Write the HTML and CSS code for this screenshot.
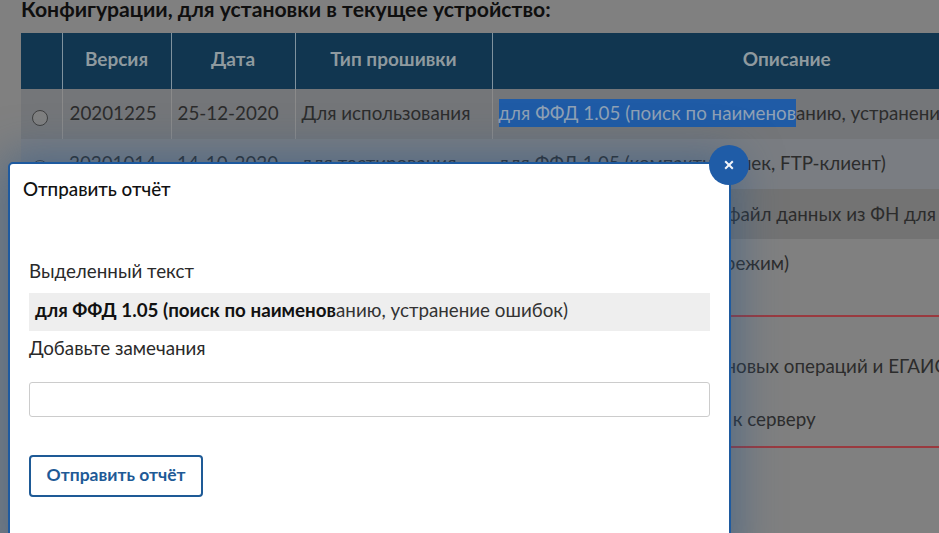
FILE: index.html
```html
<!DOCTYPE html>
<html lang="ru">
<head>
<meta charset="utf-8">
<title>Отправить отчёт</title>
<link rel="stylesheet" href="styles.css">
</head>
<body>
<main class="page">
  <h2 class="page-title">Конфигурации, для установки в текущее устройство:</h2>
  <table class="fw-table">
    <colgroup>
      <col class="c-radio"><col class="c-ver"><col class="c-date"><col class="c-type"><col class="c-desc">
    </colgroup>
    <thead>
      <tr><th></th><th>Версия</th><th>Дата</th><th>Тип прошивки</th><th>Описание</th></tr>
    </thead>
    <tbody>
      <tr class="r1 alt">
        <td class="radio-cell"><span class="radio"></span></td><td>20201225</td><td>25-12-2020</td><td>Для использования</td>
        <td><span class="sel">для ФФД 1.05 (поиск по наименов</span>анию, устранение ошибок)</td>
      </tr>
      <tr class="r2">
        <td class="radio-cell"><span class="radio"></span></td><td>20201014</td><td>14-10-2020</td><td>для тестирования</td>
        <td>для ФФД 1.05 (компактный чек, FTP-клиент)</td>
      </tr>
      <tr class="r3 alt">
        <td></td><td></td><td></td><td></td>
        <td>для ФФД 1.05 (сохранит в файл данных из ФН для проверки)</td>
      </tr>
      <tr class="r4">
        <td></td><td></td><td></td><td></td>
        <td>для ФФД 1.05 (текстовый режим)</td>
      </tr>
      <tr class="r5 red">
        <td colspan="5"></td>
      </tr>
      <tr class="r6">
        <td></td><td></td><td></td><td></td>
        <td>для ФФД 1.05 (поверка ценовых операций и ЕГАИС)</td>
      </tr>
      <tr class="r7 red">
        <td></td><td></td><td></td><td></td>
        <td>для ФФД 1.05 (обращение к серверу</td>
      </tr>
    </tbody>
  </table>
</main>

<section class="modal">
  <button class="close" type="button" aria-label="Закрыть">
    <svg width="10" height="10" viewBox="0 0 10 10"><path d="M1.2 1.2L8.8 8.8M8.8 1.2L1.2 8.8" stroke="#f2f5fa" stroke-width="2" fill="none"/></svg>
  </button>
  <h3 class="modal-title">Отправить отчёт</h3>
  <div class="modal-body">
    <label class="label">Выделенный текст</label>
    <div class="quote"><b>для ФФД 1.05 (поиск по наименов</b>анию, устранение ошибок)</div>
    <label class="label label-2">Добавьте замечания</label>
    <input class="field" type="text">
    <button class="submit" type="button">Отправить отчёт</button>
  </div>
</section>
</body>
</html>
```
FILE: styles.css
```css
html, body {
  margin: 0;
  height: 100%;
  overflow: hidden;
  background: #808080;
  font-family: Lato, "Noto Sans", sans-serif;
}
.page {
  padding: 0 0 0 21px;
  width: 1200px;
}
.page-title {
  margin: 0;
  height: 33px;
  font-size: 21.2px;
  line-height: 18px;
  font-weight: 700;
  color: #0f0f0f;
}
.fw-table {
  border-collapse: collapse;
  table-layout: fixed;
  width: 1060px;
  font-size: 18.8px;
  color: #2c2c2c;
}
.c-radio { width: 41px; }
.c-ver { width: 109px; }
.c-date { width: 124px; }
.c-type { width: 197px; }
.c-desc { width: 589px; }
.fw-table th {
  height: 56px;
  padding: 0 0 6px;
  box-sizing: border-box;
  background: #113650;
  color: #8f9a9f;
  font-size: 19px;
  font-weight: 700;
  text-align: center;
  border-left: 1px solid #7f929e;
}
.fw-table th:first-child, .fw-table td:first-child { border-left: 0; }
.fw-table td {
  padding: 0 6px;
  white-space: nowrap;
}
.fw-table td:nth-child(2) { padding-left: 7px; }
.fw-table .radio-cell { padding: 0 3px 0 0; text-align: center; }
.r1 td { height: 50px; padding-bottom: 4px; box-sizing: border-box; border-left: 1px solid #8a8a8a; background: #747679; }
.r2 td { height: 50px; padding-bottom: 4px; box-sizing: border-box; background: #7a7d82; }
.r3 td { height: 50px; padding-bottom: 1px; box-sizing: border-box; background: #737373; }
.r4 td { height: 51px; padding-bottom: 4px; box-sizing: border-box; }
.fw-table .r5 td { height: 26px; padding: 0; box-sizing: border-box; border-bottom: 2px solid #9a3a3f; }
.fw-table .r6 td { height: 76px; padding-top: 22px; box-sizing: border-box; }
.fw-table .r7 td { height: 55px; box-sizing: border-box; padding-bottom: 1px; border-bottom: 2px solid #9a3a3f; }
.radio {
  display: inline-block;
  width: 14px;
  height: 14px;
  margin-top: 11px;
  border: 1px solid #3f3f3f;
  border-radius: 50%;
  background: #808080;
}
.sel {
  background: #1f5ba6;
  color: #8fa1b5;
  padding: 2px 0 3px;
}
.modal {
  position: absolute;
  left: 8px;
  top: 162px;
  width: 719px;
  height: 400px;
  border: 2px solid #1e5a9f;
  border-radius: 5px;
  background: #fff;
  box-shadow: 0 0 45px 5px rgba(40, 85, 135, 0.55);
}
.close {
  position: absolute;
  right: -20px;
  top: -19px;
  width: 40px;
  height: 40px;
  padding: 0;
  display: flex;
  align-items: center;
  justify-content: center;
  border: 0;
  border-radius: 50%;
  background: #1f5ca7;
}
.modal-title {
  margin: 0;
  padding: 15px 0 0 13px;
  font-size: 18.8px;
  line-height: 20px;
  font-weight: 500;
  color: #111;
}
.modal-body {
  display: flex;
  flex-direction: column;
  align-items: flex-start;
  padding: 61px 19px 0;
}
.label {
  font-size: 18.8px;
  line-height: 22px;
  color: #2a2a2a;
}
.quote {
  box-sizing: border-box;
  width: 681px;
  height: 38px;
  margin-top: 11px;
  padding: 0 6px;
  background: #eeeeee;
  font-size: 18.8px;
  line-height: 33px;
  color: #333;
}
.quote b { color: #111; }
.label-2 { margin-top: 6px; }
.field {
  box-sizing: border-box;
  width: 681px;
  height: 35px;
  margin-top: 23px;
  border: 1px solid #cccccc;
  border-radius: 3px;
  background: #fff;
}
.submit {
  width: 174px;
  height: 42px;
  margin-top: 38px;
  padding: 0 0 4px;
  border: 2px solid #1e5a96;
  border-radius: 4px;
  background: #fff;
  color: #1e5a96;
  font-family: inherit;
  font-size: 17.5px;
  font-weight: 700;
}
```
